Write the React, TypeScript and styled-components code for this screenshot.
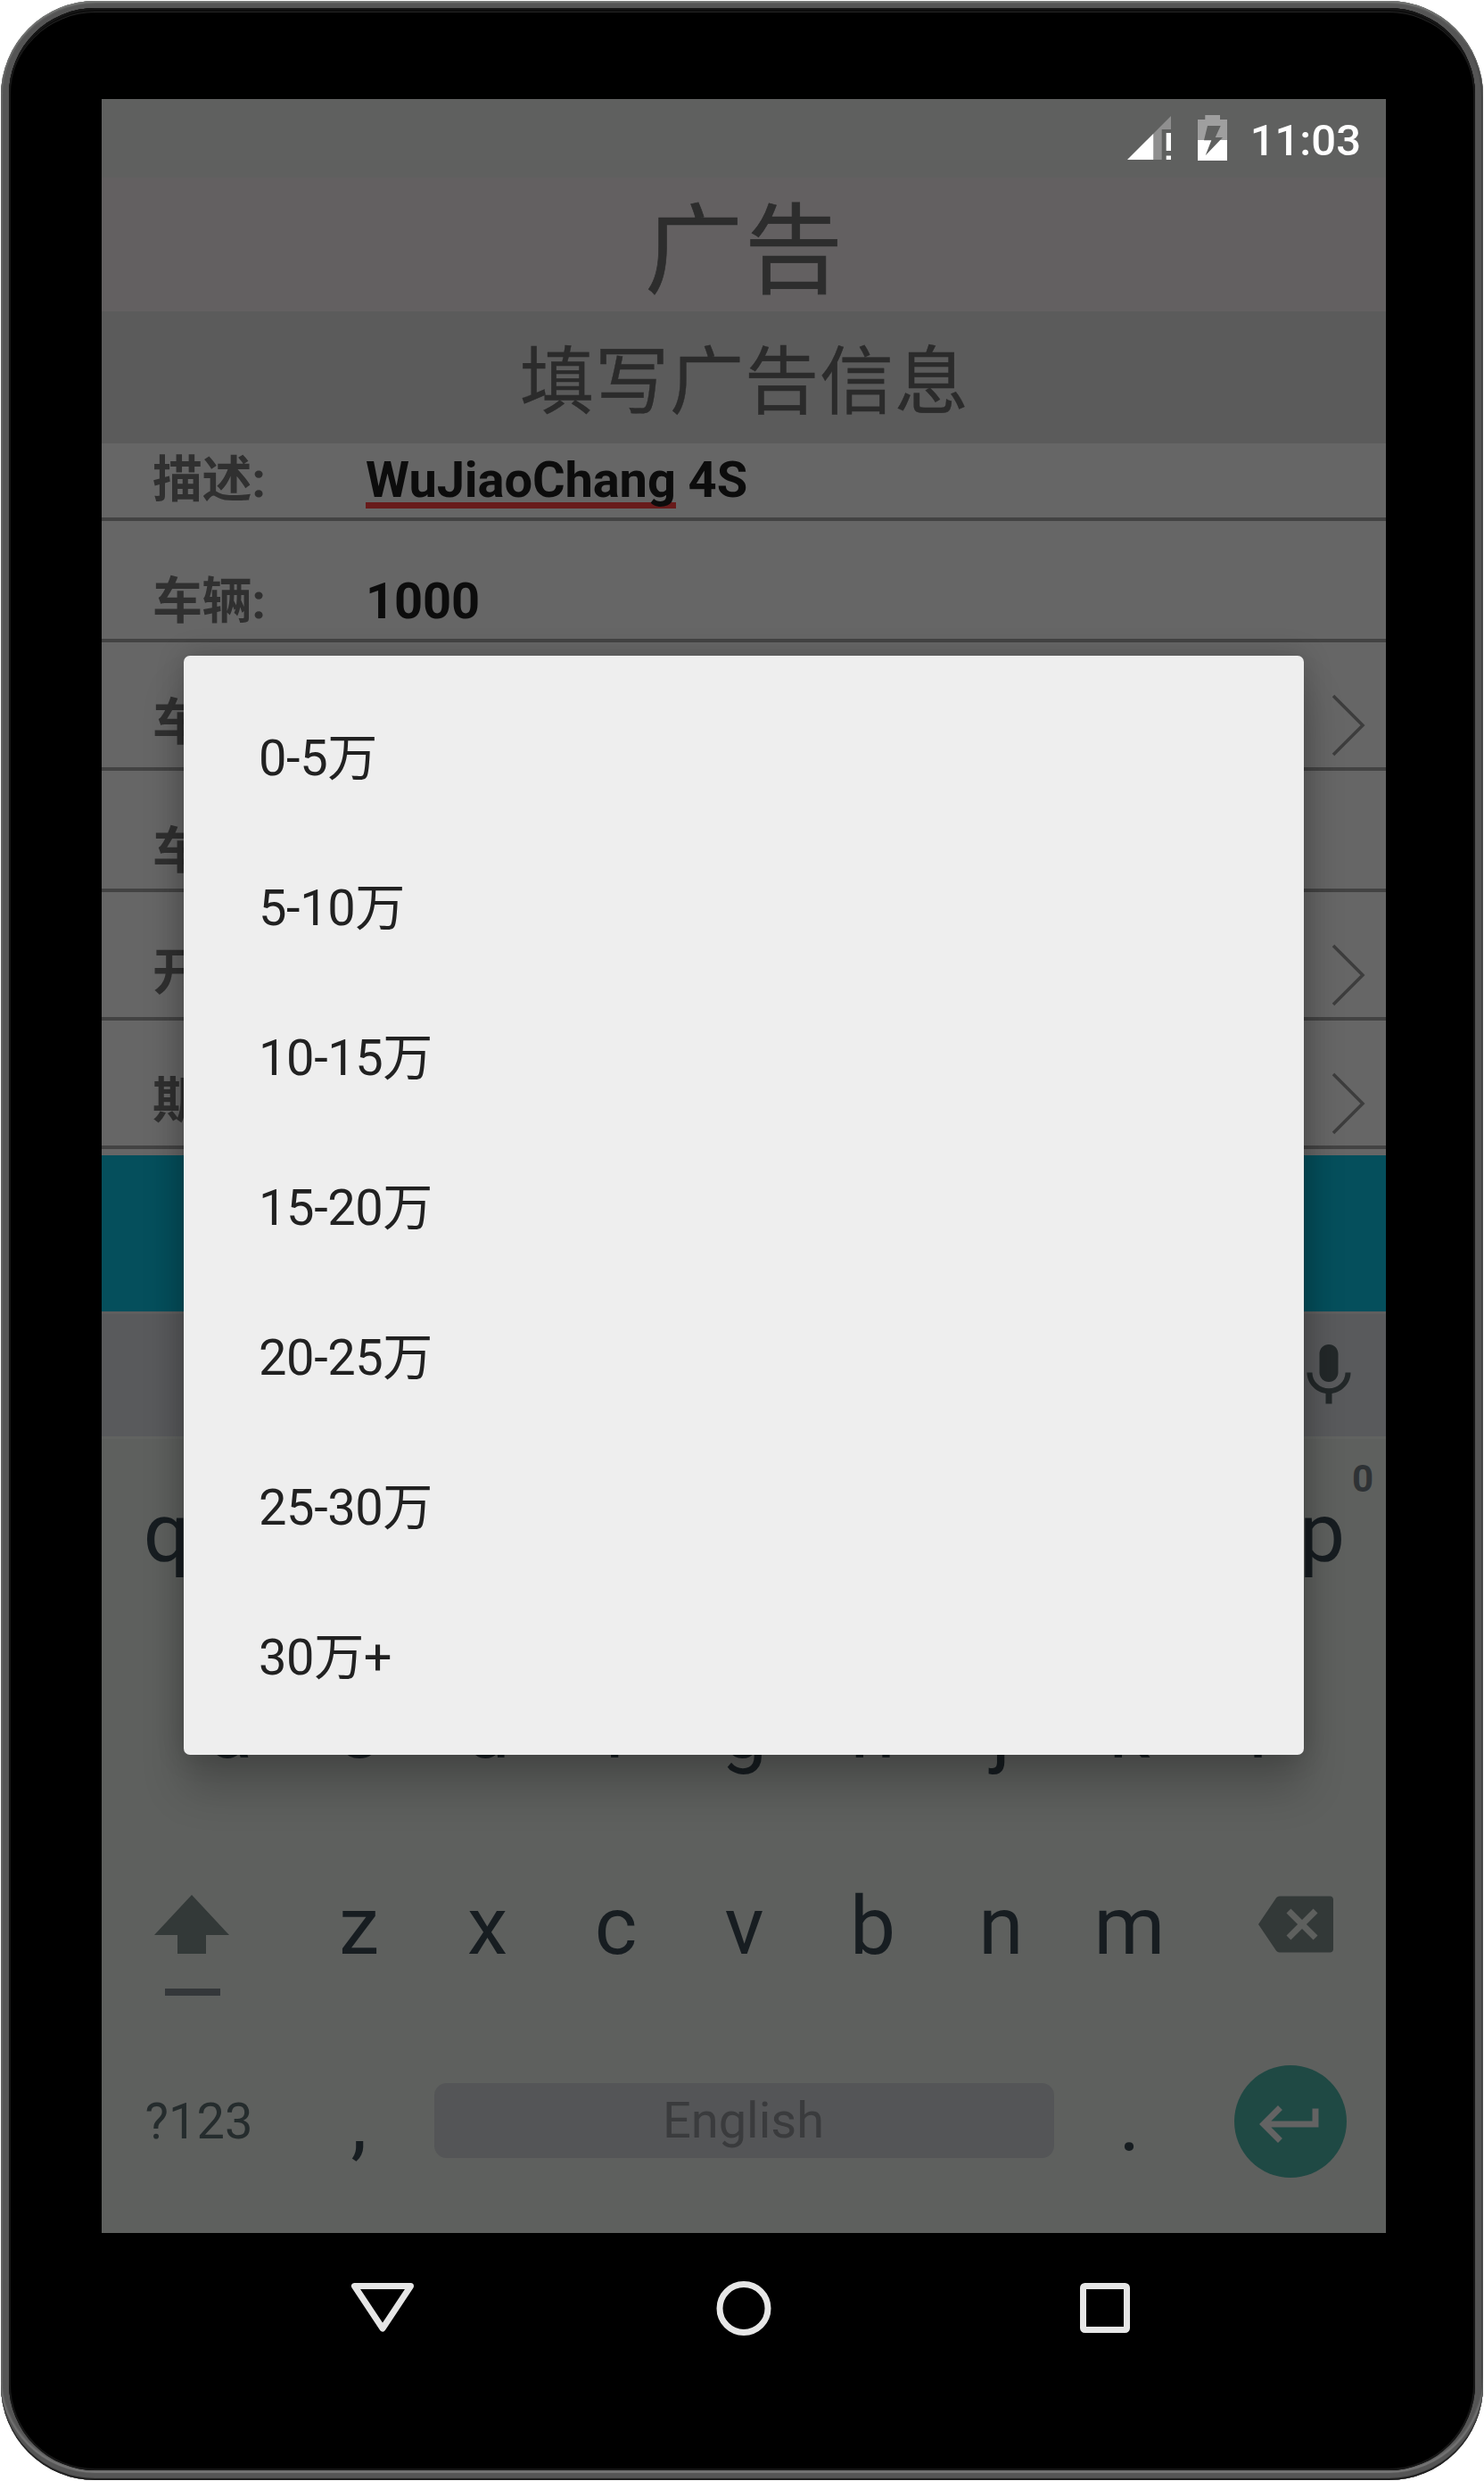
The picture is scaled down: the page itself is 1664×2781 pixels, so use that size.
import React from "react";
import styled, { createGlobalStyle } from "styled-components";

const GlobalStyle = createGlobalStyle`
  html, body {
    margin: 0;
    padding: 0;
    background: #fff;
  }
  *, *::before, *::after {
    box-sizing: border-box;
  }
  body {
    font-family: Roboto, "Noto Sans CJK SC", sans-serif;
  }
`;

/* ---------- device ---------- */

const Device = styled.div`
  width: 1664px;
  height: 2781px;
  padding: 1px;
  overflow: hidden;
`;

const Rim = styled.div`
  width: 1662px;
  height: 2779px;
  padding: 8px 9px 11px;
  border-radius: 106px;
  background: #555;
  box-shadow: inset 0 2px 2px #7a7c7a, inset 0 -2px 1px #1d1d1d, inset 0 -9px 1px -1px #555,
    inset 0 -11px 2px #777, inset -2px 0 1px #3a3a3a, inset 2px 0 1px #606060;
`;

const Face = styled.div`
  width: 1644px;
  height: 2760px;
  padding: 102px 104px 0;
  border-radius: 97px;
  background: #000;
  box-shadow: inset 0 0 0 2px #161616, inset 0 4px 0 #0d0d0d, inset 0 5px 0 #242424;
`;

const Screen = styled.main`
  position: relative;
  width: 1440px;
  height: 2392px;
  display: flex;
  flex-direction: column;
  background: #666;
`;

/* ---------- status and titles ---------- */

const StatusBar = styled.div`
  height: 88px;
  flex: none;
  display: flex;
  justify-content: flex-end;
  align-items: flex-start;
  padding: 18px 28px 0 0;
  background: #5f605f;
`;

const SignalIcon = styled.svg`
  width: 49px;
  height: 49px;
  margin: 1px 30px 0 0;
`;

const BatteryIcon = styled.svg`
  width: 33px;
  height: 51px;
  margin-right: 26px;
`;

const Clock = styled.span`
  color: #fff;
  font-size: 49px;
  font-weight: 500;
  line-height: 58px;
`;

const TitleBar = styled.h1`
  flex: none;
  height: 150px;
  margin: 0;
  padding: 17px 0 0 2px;
  background: #636061;
  color: #2d2d2d;
  font-size: 110px;
  font-weight: 400;
  line-height: 133px;
  letter-spacing: 2px;
  text-align: center;
  -webkit-text-stroke: 0.7px #2d2d2d;
`;

const SubtitleBar = styled.h2`
  flex: none;
  height: 148px;
  margin: 0;
  padding: 12px 0 0 2px;
  background: #5b5b5b;
  color: #2b2b2b;
  font-size: 83px;
  font-weight: 400;
  line-height: 136px;
  letter-spacing: 1px;
  text-align: center;
  -webkit-text-stroke: 0.4px #2b2b2b;
`;

/* ---------- form ---------- */

const Form = styled.div`
  flex: none;
  height: 798px;
  display: flex;
  flex-direction: column;
`;

const FormRow = styled.div<{ $height: number; $pad: number }>`
  flex: none;
  height: ${(p) => p.$height}px;
  padding: 0 22px ${(p) => p.$pad}px 57px;
  display: flex;
  align-items: flex-end;
  border-bottom: 4px solid #434343;
`;

const Label = styled.span`
  width: 239px;
  color: #303030;
  font-size: 56px;
  font-weight: 700;
  line-height: 66px;
  letter-spacing: -0.4px;
  white-space: nowrap;
`;

const Value = styled.span`
  flex: 1;
  color: #0c0c0c;
  font-size: 56px;
  font-weight: 700;
  line-height: 66px;
  letter-spacing: -0.1px;
`;

const Misspelled = styled.span`
  background: linear-gradient(#681b1b, #681b1b) 0 58px / 100% 7px no-repeat;
`;

const Chevron = styled.svg`
  width: 40px;
  height: 72px;
  margin-bottom: -6px;
`;

const SubmitButton = styled.div`
  flex: none;
  height: 175px;
  background: #054f5c;
`;

/* ---------- keyboard ---------- */

const Suggestions = styled.div`
  flex: none;
  height: 140px;
  padding-right: 22px;
  display: flex;
  align-items: center;
  justify-content: flex-end;
  border-top: 3px solid #5f5f5f;
  background: #595a5c;
`;

const Keyboard = styled.div`
  flex: 1;
  background: #5e605e;
  box-shadow: inset 0 3px 0 #616361;
`;

const KeyRow = styled.div`
  height: 220px;
  display: flex;
  justify-content: center;
`;

const Key = styled.div<{ $wide?: boolean }>`
  position: relative;
  width: ${(p) => (p.$wide ? 216 : 144)}px;
  padding: 0 0 2px 1px;
  display: flex;
  align-items: center;
  justify-content: center;
  color: #171d21;
  font-size: 91px;
  line-height: 110px;
`;

const Hint = styled.span`
  position: absolute;
  top: 27px;
  right: 14px;
  color: #2e3235;
  font-size: 42px;
  font-weight: 700;
  line-height: 42px;
`;

const ShiftKey = styled(Key)`
  flex-direction: column;
  align-items: center;
  justify-content: flex-start;
  padding: 74px 14px 0 0;
`;

const ShiftBar = styled.span`
  width: 62px;
  height: 8px;
  margin: 39px 0 0 2px;
  background: #34373a;
`;

const DeleteKey = styled(Key)`
  padding: 0 0 6px 14px;
`;

const SymbolsKey = styled(Key)`
  padding: 0 0 4px 2px;
  color: #252c2d;
  font-size: 56px;
`;

const SpaceKey = styled.div`
  width: 695px;
  height: 84px;
  margin: 65px 12px 0 13px;
  padding-right: 2px;
  border-radius: 14px;
  background: #545557;
  color: #3a3b3d;
  font-size: 56px;
  line-height: 84px;
  text-align: center;
`;

const EnterKey = styled(Key)`
  padding: 0 0 5px 1px;
`;

const EnterDisc = styled.div`
  width: 126px;
  height: 126px;
  padding-top: 7px;
  display: flex;
  align-items: center;
  justify-content: center;
  border-radius: 50%;
  background: #1f4944;
`;

const GlyphIcon = styled.svg<{ $color: string }>`
  width: 84px;
  height: 84px;
  display: block;
  fill: ${(p) => p.$color};
`;

/* ---------- dialog ---------- */

const DialogLayer = styled.div`
  position: absolute;
  inset: 88px 0 0;
  display: flex;
  align-items: center;
  justify-content: center;
`;

const Dialog = styled.ul`
  width: 1256px;
  margin: 0;
  padding: 28px 0;
  list-style: none;
  border-radius: 7px;
  background: #eee;
  box-shadow: 0 39px 48px rgba(0, 0, 0, 0.2), 0 0 32px rgba(0, 0, 0, 0.2);
`;

const Option = styled.li`
  height: 168px;
  padding: 6px 84px 0;
  color: #212121;
  font-size: 56px;
  line-height: 162px;
  letter-spacing: -0.4px;
`;

/* ---------- navigation ---------- */

const NavBar = styled.nav`
  width: 1440px;
  height: 168px;
  display: flex;
  justify-content: center;
  align-items: center;
  gap: 333px;
`;

const NavIcon = styled.svg`
  width: 72px;
  height: 72px;
  fill: none;
  stroke: #e6e6e6;
  stroke-width: 7;
  stroke-linejoin: round;
`;

const rows = [
  { label: "描述:", height: 87, pad: 9, arrow: false, flagged: "WuJiaoChang", value: " 4S" },
  { label: "车辆:", height: 136, pad: 9, arrow: false, value: "1000" },
  { label: "车价:", height: 144, pad: 17, arrow: true },
  { label: "车型:", height: 136, pad: 9, arrow: false },
  { label: "开始:", height: 144, pad: 17, arrow: true },
  { label: "期限:", height: 144, pad: 17, arrow: true },
];

const options = ["0-5万", "5-10万", "10-15万", "15-20万", "20-25万", "25-30万", "30万+"];

export default function App() {
  return (
    <Device>
      <GlobalStyle />
      <Rim>
        <Face>
          <Screen>
            <StatusBar>
              <SignalIcon viewBox="0 0 49 49">
                <path d="M29.3 19.7 49 0v15H38.7v34h-9.4z" fill="#8f8f8f" />
                <path d="M0 49 29.3 19.7V49z" fill="#fff" />
                <path d="M43.7 19H49v20h-5.3zM43.7 44.5H49V49h-5.3z" fill="#fff" />
              </SignalIcon>
              <BatteryIcon viewBox="0 0 33 51">
                <path d="M8.3 0H25v5h8v23H0V5h8.3z" fill="#9f9f9f" />
                <path d="M0 28h33v23H0z" fill="#fff" />
                <path d="M11 12h14.7l-6 13H28L8.7 45.3l6.6-17H7z" fill="#5f605f" />
              </BatteryIcon>
              <Clock>11:03</Clock>
            </StatusBar>
            <TitleBar>广告</TitleBar>
            <SubtitleBar>填写广告信息</SubtitleBar>
            <Form>
              {rows.map((row) => (
                <FormRow key={row.label} $height={row.height} $pad={row.pad}>
                  <Label>{row.label}</Label>
                  <Value>
                    {row.flagged && <Misspelled>{row.flagged}</Misspelled>}
                    {row.value}
                  </Value>
                  {row.arrow && (
                    <Chevron viewBox="0 0 40 72" fill="none" stroke="#3d3d3d" strokeWidth="3.5">
                      <path d="M3 3 36 36 3 69" />
                    </Chevron>
                  )}
                </FormRow>
              ))}
            </Form>
            <SubmitButton />
            <Suggestions>
              <GlyphIcon $color="#232829" viewBox="0 0 24 24">
                <path d="M12 14c1.66 0 2.99-1.34 2.99-3L15 5c0-1.66-1.34-3-3-3S9 3.34 9 5v6c0 1.66 1.34 3 3 3zm5.3-3c0 3-2.54 5.1-5.3 5.1S6.7 14 6.7 11H5c0 3.41 2.72 6.23 6 6.72V21h2v-3.28c3.28-.48 6-3.3 6-6.72h-1.7z" />
              </GlyphIcon>
            </Suggestions>
            <Keyboard>
              <KeyRow>
                {"qwertyuiop".split("").map((k) => (
                  <Key key={k}>
                    {k}
                    {k === "p" && <Hint>0</Hint>}
                  </Key>
                ))}
              </KeyRow>
              <KeyRow>
                {"asdfghjkl".split("").map((k) => (
                  <Key key={k}>{k}</Key>
                ))}
              </KeyRow>
              <KeyRow>
                <ShiftKey $wide>
                  <svg width="84" height="66" viewBox="0 0 84 66">
                    <path d="M42 0 84 45H58v21H26V45H0z" fill="#333938" />
                  </svg>
                  <ShiftBar />
                </ShiftKey>
                {"zxcvbnm".split("").map((k) => (
                  <Key key={k}>{k}</Key>
                ))}
                <DeleteKey $wide>
                  <GlyphIcon $color="#333938" viewBox="0 0 24 24">
                    <path d="M23 3H6.8c-.5 0-.95.25-1.2.7L0 12l5.6 8.3c.25.45.7.7 1.2.7H23c.55 0 1-.45 1-1V4c0-.55-.45-1-1-1zm-4 12.59L17.59 17 14 13.41 10.41 17 9 15.59 12.59 12 9 8.41 10.41 7 14 10.59 17.59 7 19 8.41 15.41 12 19 15.59z" />
                  </GlyphIcon>
                </DeleteKey>
              </KeyRow>
              <KeyRow>
                <SymbolsKey $wide>?123</SymbolsKey>
                <Key>,</Key>
                <SpaceKey>English</SpaceKey>
                <Key>.</Key>
                <EnterKey $wide>
                  <EnterDisc>
                    <GlyphIcon $color="#636363" viewBox="0 0 24 24">
                      <path d="M19 7v4H5.83l3.58-3.59L8 6l-6 6 6 6 1.41-1.41L5.83 13H21V7z" />
                    </GlyphIcon>
                  </EnterDisc>
                </EnterKey>
              </KeyRow>
            </Keyboard>
            <DialogLayer>
              <Dialog>
                {options.map((o) => (
                  <Option key={o}>{o}</Option>
                ))}
              </Dialog>
            </DialogLayer>
          </Screen>
          <NavBar>
            <NavIcon viewBox="0 0 72 72">
              <path d="M4.5 11.5h63L36 59z" />
            </NavIcon>
            <NavIcon viewBox="0 0 72 72">
              <circle cx="36" cy="36.5" r="27" />
            </NavIcon>
            <NavIcon viewBox="0 0 72 72">
              <rect x="11.5" y="11.5" width="49" height="49" rx="2" />
            </NavIcon>
          </NavBar>
        </Face>
      </Rim>
    </Device>
  );
}
